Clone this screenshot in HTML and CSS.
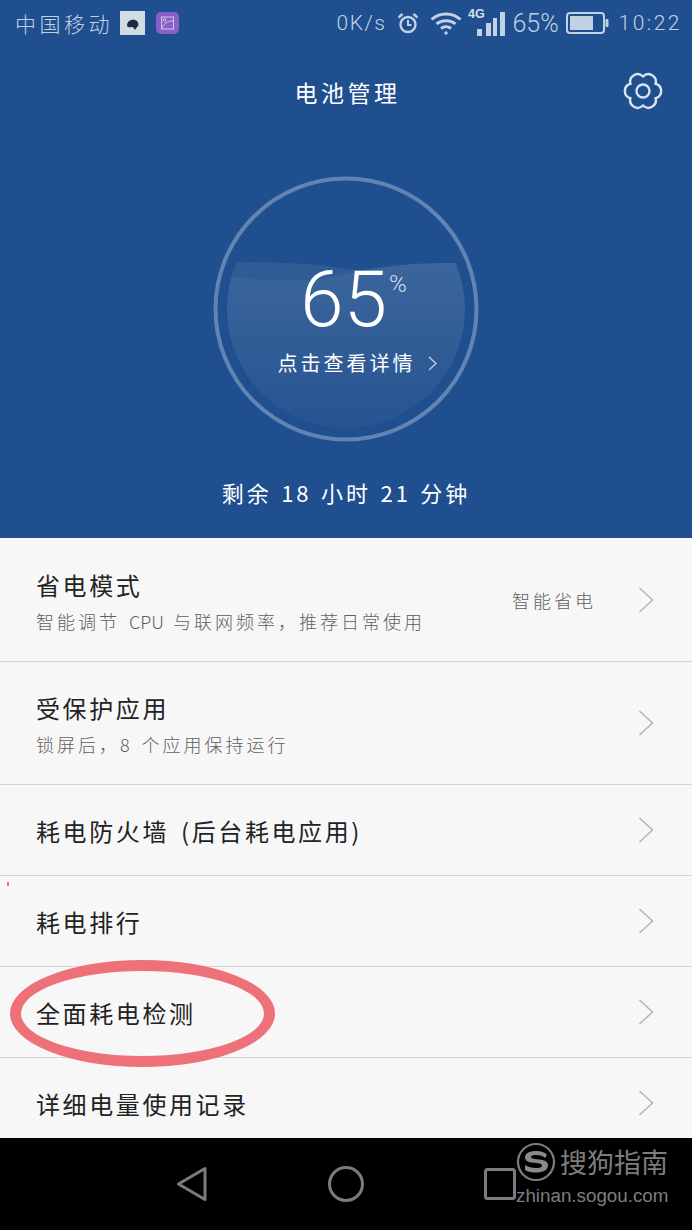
FILE: index.html
```html
<!DOCTYPE html>
<html lang="zh-CN">
<head>
    <meta charset="UTF-8">
    <meta name="viewport" content="width=device-width, initial-scale=1.0">
    <title>电池管理</title>
    <link rel="stylesheet" href="styles.css">
</head>
<body>
    <div class="phone">
        <header class="hero">
            <div class="status">
                <span class="carrier">中国移动</span>
                <svg class="thumb" viewBox="0 0 25 24"><rect width="25" height="24" fill="#d3dbe5"/><path d="M7 15c0-5 4-7 8-6 3 1 4 4 3 6-1 1-2 2-3 4-1-2-2-3-3-3-2 0-3 1-5-1z" fill="#1a2c44"/></svg>
                <svg class="gallery" viewBox="0 0 23 22"><rect width="23" height="22" rx="5" fill="#8761c8"/><rect x="5.500" y="5" width="12" height="12" fill="none" stroke="#d5c6ee"/><path d="M6 16c2-5 6-7 11-7" fill="none" stroke="#d5c6ee"/><circle cx="8.500" cy="8" r="1.300" fill="none" stroke="#d5c6ee"/></svg>
                <span class="spacer"></span>
                <span class="speed">0K/s</span>
                <svg class="alarm" viewBox="0 0 22 22" fill="none" stroke="#c3d1e4"><circle cx="11" cy="12.500" r="7.500" stroke-width="2.400"/><path d="M11 8v5h3.500" stroke-width="2"/><path d="M1.500 5.500 5.500 2M20.500 5.500 16.500 2" stroke-width="2.400"/></svg>
                <svg class="wifi" viewBox="0 0 32 24" fill="none" stroke="#c3d1e4" stroke-width="3"><path d="M1.500 8.500c8-7.500 21-7.500 29 0"/><path d="M6.500 13c5-4.500 14-4.500 19 0"/><path d="M11 17.500c3-2.500 7-2.500 10 0"/><circle cx="16" cy="22" r="1.700" fill="#c3d1e4" stroke="none"/></svg>
                <svg class="signal" viewBox="0 0 38 30"><text x="0" y="11" class="net">4G</text><rect x="9" y="22" width="5" height="7" fill="#c3d1e4"/><rect x="18" y="16" width="5" height="13" fill="#c3d1e4"/><rect x="25" y="11" width="4" height="18" fill="#c3d1e4"/><rect x="32" y="5" width="5" height="24" fill="#c3d1e4"/></svg>
                <span class="pct">65%</span>
                <svg class="battery" viewBox="0 0 43 22"><rect x="1" y="1" width="37" height="20" rx="3" fill="none" stroke="#c3d1e4" stroke-width="2"/><rect x="4" y="4" width="23" height="14" fill="#c3d1e4"/><rect x="39.500" y="7" width="3" height="8" rx="1" fill="#c3d1e4"/></svg>
                <span class="clock">10:22</span>
            </div>
            <div class="toolbar">
                <h1 class="title">电池管理</h1>
                <svg class="gear" viewBox="-20 -20 40 40" fill="none" stroke="#d9e2ef" stroke-width="2.400"><path d="M0-14.500A7.500 7.500 0 0 1 12.560-7.250 7.500 7.500 0 0 1 12.560 7.250 7.500 7.500 0 0 1 0 14.500 7.500 7.500 0 0 1-12.560 7.250 7.500 7.500 0 0 1-12.560-7.250 7.500 7.500 0 0 1 0-14.500z"/><circle r="6.500"/></svg>
            </div>
            <div class="gauge">
                <svg class="gauge-bg" viewBox="0 0 266 266">
                    <defs>
                        <clipPath id="tank"><circle cx="133" cy="133" r="119"/></clipPath>
                        <linearGradient id="water" x1="0" y1="0" x2="0" y2="1">
                            <stop offset="0" stop-color="#3b659c"/>
                            <stop offset="1" stop-color="#265491"/>
                        </linearGradient>
                    </defs>
                    <circle cx="133" cy="133" r="130.500" fill="none" stroke="#6384b3" stroke-width="4"/>
                    <g clip-path="url(#tank)">
                        <path d="M0 88C40 84 100 86 160 97V266H0z" fill="#2f5c97"/>
                        <path d="M0 97C40 106 90 108 130 99 170 89 215 85 266 88V256H0z" fill="url(#water)"/>
                    </g>
                </svg>
                <div class="gauge-text">
                    <div class="level"><span class="num">65</span><span class="unit">%</span></div>
                    <div class="detail">点击查看详情<svg class="detail-arrow" viewBox="0 0 9 15"><path d="M1 1l7 6.500-7 6.500" fill="none" stroke="#c6d3e6" stroke-width="1.200"/></svg></div>
                </div>
            </div>
            <p class="remain">剩余 18 小时 21 分钟</p>
        </header>

        <ul class="list">
            <li class="row tall">
                <div class="row-text">
                    <div class="row-title">省电模式</div>
                    <div class="row-sub">智能调节 <span class="latin">CPU</span> 与联网频率，推荐日常使用</div>
                </div>
                <span class="row-value">智能省电</span>
                <svg class="chev" viewBox="0 0 16 26"><path d="M1.500 1l13 12-13 12" /></svg>
            </li>
            <li class="row tall">
                <div class="row-text">
                    <div class="row-title">受保护应用</div>
                    <div class="row-sub">锁屏后，8 个应用保持运行</div>
                </div>
                <svg class="chev" viewBox="0 0 16 26"><path d="M1.500 1l13 12-13 12" /></svg>
            </li>
            <li class="row">
                <div class="row-title">耗电防火墙 (后台耗电应用)</div>
                <svg class="chev" viewBox="0 0 16 26"><path d="M1.500 1l13 12-13 12" /></svg>
            </li>
            <li class="row">
                <div class="row-title">耗电排行</div>
                <svg class="chev" viewBox="0 0 16 26"><path d="M1.500 1l13 12-13 12" /></svg>
            </li>
            <li class="row">
                <div class="row-title">全面耗电检测</div>
                <svg class="chev" viewBox="0 0 16 26"><path d="M1.500 1l13 12-13 12" /></svg>
            </li>
            <li class="row">
                <div class="row-title">详细电量使用记录</div>
                <svg class="chev" viewBox="0 0 16 26"><path d="M1.500 1l13 12-13 12" /></svg>
            </li>
        </ul>

        <nav class="navbar">
            <svg class="nav-icon back" viewBox="0 0 32 36"><path d="M29 2.500v31L2.500 18z"/></svg>
            <svg class="nav-icon home" viewBox="0 0 36 36"><circle cx="18" cy="18" r="16.500"/></svg>
            <svg class="nav-icon recent" viewBox="0 0 32 32"><rect x="1.500" y="1.500" width="29" height="29" rx="2"/></svg>
        </nav>

        <!-- annotation and watermark sit on top of the screenshot -->
        <span class="speck"></span>
        <span class="circled"></span>
        <div class="mark">
            <div class="mark-top">
                <svg class="mark-logo" viewBox="0 0 40 40"><circle cx="20" cy="20" r="18" fill="none" stroke="#7d7d7d" stroke-width="2.200"/><path d="M31 13c-2-3-6-4-11-4-6 0-11 2-11 6.500 0 8 17 3.500 17 8 0 2-3 2.500-6 2.500-4 0-8-1-11-3v5c3 2 7 2.500 11 2.500 7 0 12-2 12-7.500 0-8-17-4-17-8 0-1.500 2-2 5-2 4 0 7 1 9 3z" fill="#8a8a8a"/></svg>
                <span class="mark-name">搜狗指南</span>
            </div>
            <div class="mark-url">zhinan.sogou.com</div>
        </div>
    </div>
</body>
</html>
```

FILE: styles.css
```css
* {
    margin: 0;
    padding: 0;
    box-sizing: border-box;
}

body {
    background-color: #000;
    font-family: "Noto Sans CJK SC", sans-serif;
}

.phone {
    position: relative;
    width: 692px;
    height: 1230px;
    overflow: hidden;
}

.hero {
    height: 538px;
    background-color: #1f4f8e;
    display: flex;
    flex-direction: column;
    align-items: center;
}

.status {
    width: 100%;
    height: 46px;
    padding: 0 10px 0 15px;
    display: flex;
    align-items: center;
    color: #c3d1e4;
}

.carrier {
    font-size: 21px;
    font-weight: 300;
    letter-spacing: 3.500px;
    width: 105px;
}

.thumb {
    width: 25px;
    height: 24px;
    margin-right: 11px;
}

.gallery {
    width: 23px;
    height: 22px;
}

.spacer {
    flex: 1;
}

.speed {
    font-family: "Roboto", sans-serif;
    font-weight: 300;
    font-size: 21px;
    letter-spacing: 1.500px;
    width: 61px;
}

.alarm {
    width: 22px;
    height: 22px;
    margin-right: 11px;
}

.wifi {
    width: 32px;
    height: 24px;
    margin-right: 6px;
}

.signal {
    width: 38px;
    height: 30px;
    margin-right: 6px;
    margin-bottom: 3px;
}

.net {
    font-family: "Liberation Sans", sans-serif;
    font-size: 12.500px;
    font-weight: 700;
    fill: #d6e0ed;
}

.pct {
    font-family: "Roboto", sans-serif;
    font-weight: 300;
    font-size: 25px;
    width: 54px;
}

.battery {
    width: 43px;
    height: 22px;
    margin-right: 9px;
}

.clock {
    font-family: "Roboto", sans-serif;
    font-weight: 300;
    font-size: 21px;
    letter-spacing: 2.500px;
}

.toolbar {
    position: relative;
    width: 100%;
    height: 94px;
    padding: 0 0 2px 3px;
    display: flex;
    align-items: center;
    justify-content: center;
}

.title {
    font-size: 23px;
    font-weight: 400;
    letter-spacing: 3.500px;
    color: #fff;
}

.gear {
    position: absolute;
    right: 29px;
    top: 25px;
    width: 40px;
    height: 40px;
}

.gauge {
    width: 266px;
    height: 266px;
    margin-top: 36px;
    display: grid;
}

.gauge-bg,
.gauge-text {
    grid-area: 1 / 1;
}

.gauge-bg {
    width: 266px;
    height: 266px;
}

.gauge-text {
    display: flex;
    flex-direction: column;
    align-items: center;
    padding-top: 79px;
    color: #fff;
}

.level {
    height: 90px;
    margin-left: -5px;
    display: flex;
    justify-content: center;
}

.num {
    font-family: "Roboto", sans-serif;
    font-weight: 300;
    font-size: 78px;
    line-height: 90px;
}

.unit {
    font-family: "Roboto", sans-serif;
    font-weight: 300;
    font-size: 24px;
    line-height: 24px;
    margin-top: 17px;
    margin-left: 2px;
    margin-right: -20px;
    color: #d5dfed;
}

.detail {
    font-size: 20px;
    font-weight: 400;
    letter-spacing: 3px;
    line-height: 30px;
    margin-top: 3px;
    margin-left: 22px;
    display: flex;
    align-items: center;
}

.detail-arrow {
    width: 9px;
    height: 15px;
    margin-left: 12px;
}

.remain {
    margin-top: 35px;
    font-size: 22px;
    font-weight: 400;
    line-height: 30px;
    letter-spacing: 3px;
    color: #fff;
    word-spacing: 1.500px;
}

.list {
    list-style: none;
    height: 600px;
    overflow: hidden;
    background-color: #f7f7f7;
}

.row {
    height: 91px;
    padding: 0 38px 0 36px;
    border-bottom: 1px solid #d4d4d4;
    display: flex;
    align-items: center;
    justify-content: space-between;
}

.row.tall {
    height: 123px;
}

.row.tall:first-child {
    height: 124px;
}

.row > .row-title {
    padding-top: 2px;
}

.row-text {
    flex: 1;
    padding-top: 6px;
}

.row-title {
    font-size: 24px;
    font-weight: 400;
    line-height: 28px;
    letter-spacing: 2.600px;
    word-spacing: 4px;
    color: #222;
}

.row-sub {
    font-size: 18px;
    font-weight: 300;
    line-height: 28px;
    letter-spacing: 3px;
    word-spacing: 2px;
    margin-top: 8px;
    color: #5f5f5f;
}

.latin {
    letter-spacing: 0;
}

.row-value {
    font-size: 18px;
    font-weight: 300;
    letter-spacing: 3px;
    color: #5f5f5f;
    margin-right: 42px;
}

.chev {
    width: 16px;
    height: 26px;
    flex-shrink: 0;
}

.chev path {
    fill: none;
    stroke: #b4b4b4;
    stroke-width: 1.500;
}

.navbar {
    height: 92px;
    background-color: #000;
    display: flex;
    align-items: center;
    padding-left: 176px;
}

.nav-icon {
    fill: none;
    stroke: #7c7c7c;
    stroke-width: 3;
    stroke-linejoin: round;
}

.back {
    width: 32px;
    height: 36px;
    margin-right: 120px;
}

.home {
    width: 36px;
    height: 36px;
    margin-right: 120px;
}

.recent {
    width: 32px;
    height: 32px;
}

.speck {
    position: absolute;
    left: 7px;
    top: 882px;
    width: 2px;
    height: 4px;
    background-color: #f06a80;
}

.circled {
    position: absolute;
    left: 10px;
    top: 960px;
    width: 265px;
    height: 107px;
    border: 11px solid #ee7079;
    border-radius: 50%;
}

.mark {
    position: absolute;
    left: 516px;
    top: 1142px;
    color: #7d7d7d;
}

.mark-top {
    display: flex;
    align-items: center;
    height: 40px;
}

.mark-logo {
    width: 40px;
    height: 40px;
    margin-right: 4px;
}

.mark-name {
    font-size: 27px;
    line-height: 40px;
}

.mark-url {
    font-family: "Liberation Sans", sans-serif;
    font-size: 18.800px;
    line-height: 24px;
    margin-top: 2px;
}
```
